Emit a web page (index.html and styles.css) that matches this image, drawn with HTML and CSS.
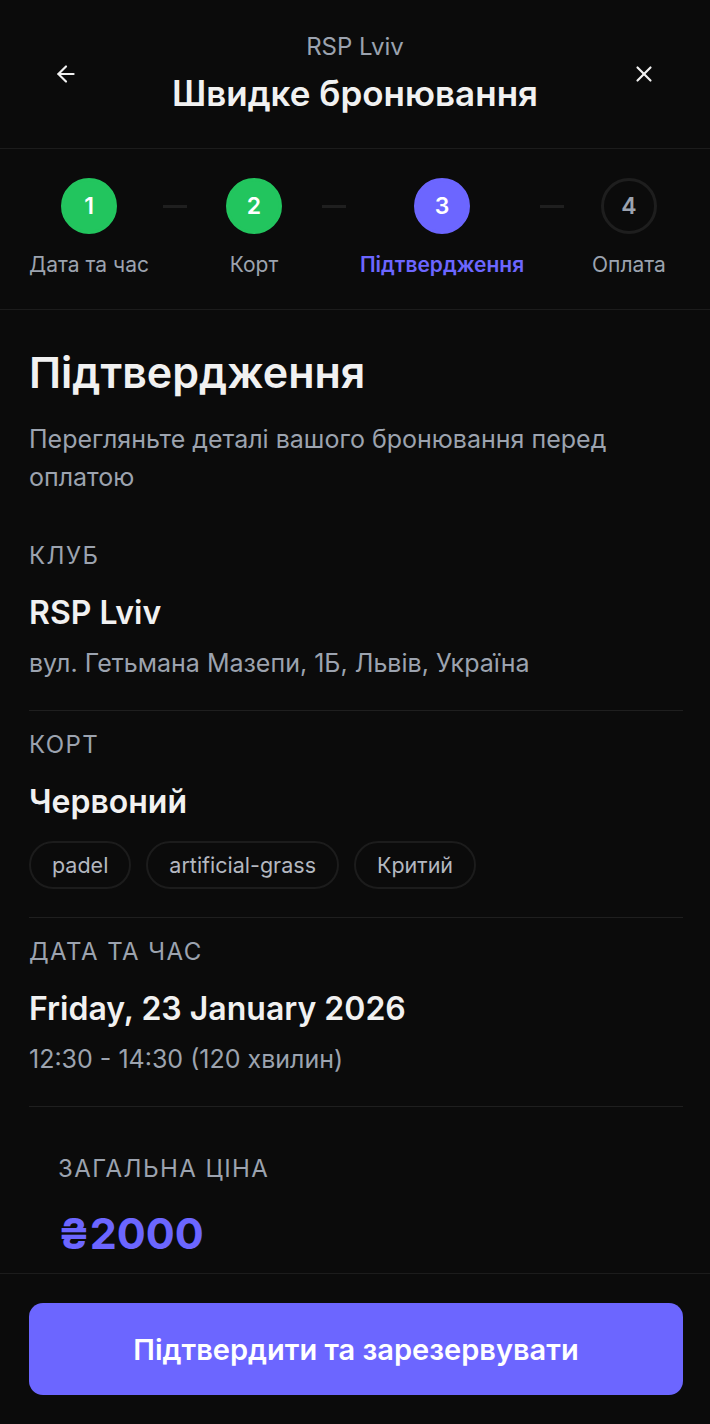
FILE: index.html
```html
<!DOCTYPE html>
<html lang="uk">
<head>
<meta charset="utf-8">
<title>Швидке бронювання</title>
<link rel="stylesheet" href="styles.css">
</head>
<body>
<div class="app">
  <header class="topbar">
    <button class="icon-btn" aria-label="Назад">
      <svg width="26" height="26" viewBox="0 0 24 24" fill="none" stroke="currentColor" stroke-width="2" stroke-linecap="round" stroke-linejoin="round"><path d="M19 12H5"/><path d="M12 19l-7-7 7-7"/></svg>
    </button>
    <div class="topbar-titles">
      <div class="topbar-sub">RSP Lviv</div>
      <div class="topbar-title">Швидке бронювання</div>
    </div>
    <button class="icon-btn" aria-label="Закрити">
      <svg width="26" height="26" viewBox="0 0 24 24" fill="none" stroke="currentColor" stroke-width="2" stroke-linecap="round" stroke-linejoin="round"><path d="M18 6L6 18"/><path d="M6 6l12 12"/></svg>
    </button>
  </header>

  <nav class="stepper">
    <div class="step step-1 done"><span class="dot">1</span><span class="step-label">Дата та час</span></div>
    <span class="conn conn-1"></span>
    <div class="step step-2 done"><span class="dot">2</span><span class="step-label">Корт</span></div>
    <span class="conn conn-2"></span>
    <div class="step step-3 active"><span class="dot">3</span><span class="step-label">Підтвердження</span></div>
    <span class="conn conn-3"></span>
    <div class="step step-4"><span class="dot">4</span><span class="step-label">Оплата</span></div>
  </nav>

  <main class="content">
    <div class="intro">
      <h1 class="page-title">Підтвердження</h1>
      <p class="page-sub">Перегляньте деталі вашого бронювання перед оплатою</p>
    </div>

    <section class="block">
      <div class="block-label">Клуб</div>
      <div class="block-main">RSP Lviv</div>
      <div class="block-sub">вул. Гетьмана Мазепи, 1Б, Львів, Україна</div>
    </section>

    <section class="block">
      <div class="block-label">Корт</div>
      <div class="block-main">Червоний</div>
      <div class="chips">
        <span class="chip">padel</span>
        <span class="chip">artificial-grass</span>
        <span class="chip">Критий</span>
      </div>
    </section>

    <section class="block">
      <div class="block-label">Дата та час</div>
      <div class="block-main">Friday, 23 January 2026</div>
      <div class="block-sub">12:30 - 14:30 (120 хвилин)</div>
    </section>

    <section class="price-card">
      <div class="block-label">Загальна ціна</div>
      <div class="price">₴2000</div>
    </section>
  </main>

  <footer class="bottombar">
    <button class="primary-btn">Підтвердити та зарезервувати</button>
  </footer>
</div>
</body>
</html>
```

FILE: styles.css
```css
* { box-sizing: border-box; }
html, body { margin: 0; padding: 0; }
body {
  background: #0b0b0b;
  color: #f1f1f1;
  font-family: Inter, "Noto Sans", sans-serif;
}
.app {
  height: 100vh;
  display: flex;
  flex-direction: column;
  overflow: hidden;
}
button { font-family: inherit; }

.topbar {
  display: grid;
  grid-template-columns: 44px 1fr 44px;
  align-items: center;
  padding: 32px 44px 33px;
  border-bottom: 1px solid #1c1c1c;
  flex: none;
}
.icon-btn {
  width: 44px; height: 44px;
  display: flex; align-items: center; justify-content: center;
  background: none; border: 0; color: #f1f1f1; padding: 0;
}
.topbar-titles { text-align: center; }
.topbar-sub { font-size: 24px; line-height: 30px; color: #9ca3af; }
.topbar-title { font-size: 35px; line-height: 44px; font-weight: 600; margin-top: 9px; color: #f1f1f1; }

.stepper {
  display: flex;
  align-items: flex-start;
  padding: 29px 29px 30px;
  border-bottom: 1px solid #1c1c1c;
  flex: none;
}
.step { display: flex; flex-direction: column; align-items: center; flex: none; }
.step-1 { width: 120px; }
.step-2 { width: 50px; }
.step-3 { width: 166px; }
.step-4 { width: 74px; }
.dot {
  width: 56px; height: 56px; border-radius: 50%;
  display: flex; align-items: center; justify-content: center;
  font-size: 23px; font-weight: 600;
  border: 3px solid #1e1e1e; color: #9ca3af;
}
.done .dot { background: #22c55e; border-color: #22c55e; color: #fff; }
.active .dot { background: #6c66ff; border-color: #6c66ff; color: #fff; }
.step-label { margin-top: 17px; font-size: 21px; line-height: 28px; color: #9ca3af; white-space: nowrap; }
.active .step-label { color: #6c66ff; font-weight: 600; }
.conn { flex: none; width: 24px; height: 3px; background: #1f1f1f; margin-top: 27px; }
.conn-1 { margin-left: 14px; margin-right: 42px; }
.conn-2 { margin-left: 43px; margin-right: 13px; }
.conn-3 { margin-left: 15px; margin-right: 28px; }

.content { flex: 1; overflow: hidden; padding: 38px 27px 0 29px; }
.intro { padding-bottom: 26px; }
.page-title { margin: 0; font-size: 43px; line-height: 48px; font-weight: 600; color: #f1f1f1; }
.page-sub { margin: 24px 0 0; font-size: 25px; line-height: 38px; color: #9ca3af; }

.block { padding: 20px 0 32px; border-bottom: 1px solid #1f1f1f; }
.block-label { font-size: 24px; line-height: 28px; letter-spacing: 0.06em; text-transform: uppercase; color: #9ca3af; }
.block-main { margin-top: 25px; font-size: 32px; line-height: 36px; font-weight: 600; color: #f1f1f1; }
.block-sub { margin-top: 17px; font-size: 25px; line-height: 30px; color: #9ca3af; }
.chips { display: flex; gap: 15px; margin-top: 21px; margin-bottom: -4px; }
.chip {
  height: 48px; padding: 0 21px;
  display: inline-flex; align-items: center;
  border: 2px solid #1c1c1c; border-radius: 999px;
  font-size: 21.5px; color: #b4b8c0;
}

.price-card { margin-top: 19px; padding: 29px; }
.price { margin-top: 26px; font-size: 43px; line-height: 48px; font-weight: 700; color: #6c66ff; }

.bottombar { flex: none; padding: 29px 27px 29px 29px; border-top: 1px solid #1c1c1c; }
.primary-btn {
  width: 100%; height: 92px; border: 0; border-radius: 14px;
  background: #6c66ff; color: #fff;
  font-size: 29px; font-weight: 600;
}
```
